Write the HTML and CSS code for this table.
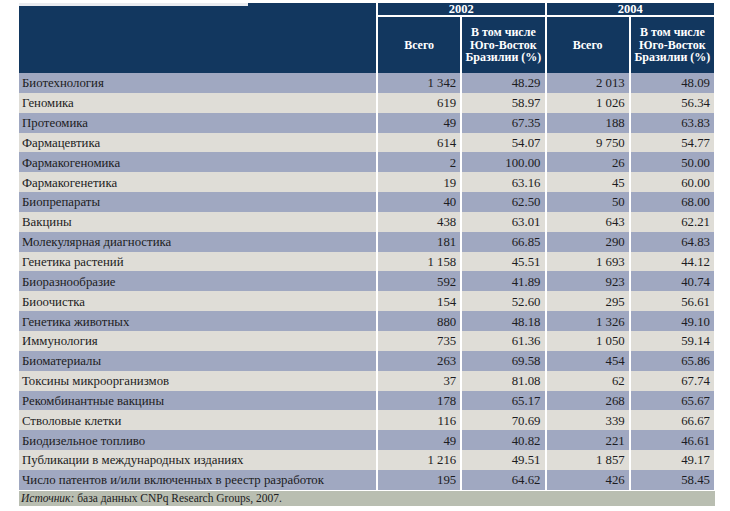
FILE: index.html
```html
<!DOCTYPE html>
<html lang="ru">
<head>
<meta charset="utf-8">
<link rel="stylesheet" href="styles.css">
</head>
<body>
<div class="page">
  <div class="cap"></div>
  <table class="tbl">
    <thead>
      <tr class="yr">
        <th class="corner" rowspan="2"></th>
        <th colspan="2" class="year">2002</th>
        <th colspan="2" class="year">2004</th>
      </tr>
      <tr class="sub">
        <th>Всего</th>
        <th>В том числе<br>Юго-Восток<br>Бразилии (%)</th>
        <th>Всего</th>
        <th>В том числе<br>Юго-Восток<br>Бразилии (%)</th>
      </tr>
    </thead>
    <tbody>
      <tr><td>Биотехнология</td><td>1 342</td><td>48.29</td><td>2 013</td><td>48.09</td></tr>
      <tr><td>Геномика</td><td>619</td><td>58.97</td><td>1 026</td><td>56.34</td></tr>
      <tr><td>Протеомика</td><td>49</td><td>67.35</td><td>188</td><td>63.83</td></tr>
      <tr><td>Фармацевтика</td><td>614</td><td>54.07</td><td>9 750</td><td>54.77</td></tr>
      <tr><td>Фармакогеномика</td><td>2</td><td>100.00</td><td>26</td><td>50.00</td></tr>
      <tr><td>Фармакогенетика</td><td>19</td><td>63.16</td><td>45</td><td>60.00</td></tr>
      <tr><td>Биопрепараты</td><td>40</td><td>62.50</td><td>50</td><td>68.00</td></tr>
      <tr><td>Вакцины</td><td>438</td><td>63.01</td><td>643</td><td>62.21</td></tr>
      <tr><td>Молекулярная диагностика</td><td>181</td><td>66.85</td><td>290</td><td>64.83</td></tr>
      <tr><td>Генетика растений</td><td>1 158</td><td>45.51</td><td>1 693</td><td>44.12</td></tr>
      <tr><td>Биоразнообразие</td><td>592</td><td>41.89</td><td>923</td><td>40.74</td></tr>
      <tr><td>Биоочистка</td><td>154</td><td>52.60</td><td>295</td><td>56.61</td></tr>
      <tr><td>Генетика животных</td><td>880</td><td>48.18</td><td>1 326</td><td>49.10</td></tr>
      <tr><td>Иммунология</td><td>735</td><td>61.36</td><td>1 050</td><td>59.14</td></tr>
      <tr><td>Биоматериалы</td><td>263</td><td>69.58</td><td>454</td><td>65.86</td></tr>
      <tr><td>Токсины микроорганизмов</td><td>37</td><td>81.08</td><td>62</td><td>67.74</td></tr>
      <tr><td>Рекомбинантные вакцины</td><td>178</td><td>65.17</td><td>268</td><td>65.67</td></tr>
      <tr><td>Стволовые клетки</td><td>116</td><td>70.69</td><td>339</td><td>66.67</td></tr>
      <tr><td>Биодизельное топливо</td><td>49</td><td>40.82</td><td>221</td><td>46.61</td></tr>
      <tr><td>Публикации в международных изданиях</td><td>1 216</td><td>49.51</td><td>1 857</td><td>49.17</td></tr>
      <tr><td>Число патентов и/или включенных в реестр разработок</td><td>195</td><td>64.62</td><td>426</td><td>58.45</td></tr>
    </tbody>
  </table>
  <div class="src"><i>Источник:</i> база данных CNPq Research Groups, 2007.</div>
</div>
</body>
</html>
```
FILE: styles.css
```css
html, body {
  margin: 0;
  padding: 0;
  background: #ffffff;
}
.page {
  position: relative;
  padding: 3px 0 0 19px;
  width: 696px;
  font-family: "Liberation Serif", "DejaVu Serif", "Times New Roman", serif;
  color: #1c1c22;
}
.cap {
  position: absolute;
  left: 19px;
  top: 3px;
  width: 229px;
  height: 3px;
  background: #e9ebef;
}
.tbl {
  border-collapse: collapse;
  table-layout: fixed;
  width: 695px;
}
.tbl th {
  background: #12375f;
  color: #ffffff;
  font-weight: bold;
  font-size: 12px;
  padding: 0;
}
.tbl .corner {
  width: 357px;
  border-right: 2px solid #ffffff;
}
.tbl .yr th.year {
  height: 12px;
  line-height: 12px;
  font-size: 12.5px;
  border-bottom: 2px solid #ffffff;
  border-left: 2px solid #ffffff;
}
.tbl .sub th {
  height: 56px;
  line-height: 12.5px;
  border-left: 2px solid #ffffff;
  text-align: center;
}
.tbl .sub th:first-child {
  border-left: none;
}
.tbl td {
  height: 18.85px;
  padding: 1px 4px 0 3px;
  font-size: 12.8px;
  line-height: 14px;
  text-align: right;
  border-left: 2px solid #ffffff;
  white-space: nowrap;
}
.tbl td:first-child {
  text-align: left;
  border-left: none;
  border-right: 2px solid #ffffff;
}
.tbl tbody tr:nth-child(odd) td {
  background: #a0a8c1;
}
.tbl tbody tr:nth-child(even) td {
  background: #dfddd7;
}
.src {
  margin-top: 1px;
  height: 15px;
  background: #b9beb1;
  font-size: 11.5px;
  line-height: 15px;
  padding-left: 2px;
  box-sizing: border-box;
  width: 696px;
}
```
